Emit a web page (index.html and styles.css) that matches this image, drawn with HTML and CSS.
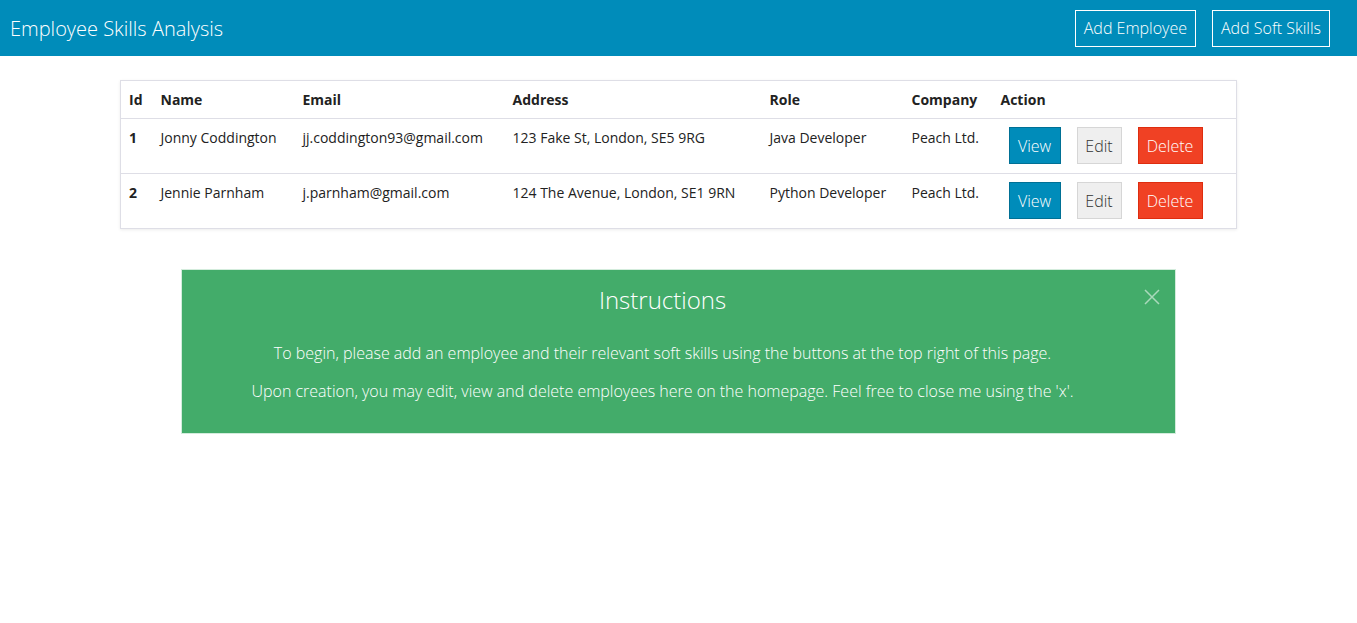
FILE: index.html
```html
<!DOCTYPE html>
<html>
<head>
<meta charset="utf-8">
<link rel="stylesheet" href="styles.css">
</head>
<body>
<header class="topbar">
  <h1 class="title">Employee Skills Analysis</h1>
  <nav class="top-actions">
    <a class="top-btn">Add Employee</a>
    <a class="top-btn">Add Soft Skills</a>
  </nav>
</header>
<main class="content">
  <table class="emp-table">
    <colgroup>
      <col class="c-id"><col class="c-name"><col class="c-email"><col class="c-addr"><col class="c-role"><col class="c-comp"><col class="c-act">
    </colgroup>
    <thead>
      <tr><th>Id</th><th>Name</th><th>Email</th><th>Address</th><th>Role</th><th>Company</th><th>Action</th></tr>
    </thead>
    <tbody>
      <tr>
        <td class="id">1</td><td>Jonny Coddington</td><td>jj.coddington93@gmail.com</td><td>123 Fake St, London, SE5 9RG</td><td>Java Developer</td><td>Peach Ltd.</td>
        <td class="actions"><div class="btn-group"><a class="btn btn-view">View</a><a class="btn btn-edit">Edit</a><a class="btn btn-delete">Delete</a></div></td>
      </tr>
      <tr>
        <td class="id">2</td><td>Jennie Parnham</td><td>j.parnham@gmail.com</td><td>124 The Avenue, London, SE1 9RN</td><td>Python Developer</td><td>Peach Ltd.</td>
        <td class="actions"><div class="btn-group"><a class="btn btn-view">View</a><a class="btn btn-edit">Edit</a><a class="btn btn-delete">Delete</a></div></td>
      </tr>
    </tbody>
  </table>

  <section class="callout">
    <h2 class="callout-title">Instructions</h2>
    <p>To begin, please add an employee and their relevant soft skills using the buttons at the top right of this page.</p>
    <p>Upon creation, you may edit, view and delete employees here on the homepage. Feel free to close me using the 'x'.</p>
    <span class="close" aria-label="close"><svg width="16" height="16" viewBox="0 0 16 16"><path d="M1 1 L15 15 M15 1 L1 15" stroke="currentColor" stroke-width="1.5" fill="none"/></svg></span>
  </section>
</main>
</body>
</html>
```
FILE: styles.css
```css
* { box-sizing: border-box; }
html, body { margin: 0; padding: 0; }
body {
  font-family: "Open Sans", "Liberation Sans", sans-serif;
  color: #222;
  background: #fff;
}
.topbar {
  height: 56px;
  background: #008cba;
  display: flex;
  align-items: center;
  justify-content: space-between;
  padding: 0 27px 0 10px;
}
.title {
  margin: 0;
  font-size: 20px;
  font-weight: 300;
  color: #fff;
}
.top-actions {
  display: flex;
  gap: 16px;
}
.top-btn {
  display: inline-flex;
  align-items: center;
  height: 37px;
  padding: 0 8px;
  border: 1px solid #fff;
  color: #fff;
  font-size: 16px;
  font-weight: 300;
}
.content {
  display: flex;
  flex-direction: column;
  align-items: center;
  padding-top: 24px;
}
.emp-table {
  width: 1117px;
  border-collapse: collapse;
  border: 1px solid #dedee6;
  box-shadow: 0 1px 3px rgba(0,0,0,0.08);
  font-size: 14px;
  table-layout: fixed;
}
.c-id { width: 32px; }
.c-name { width: 142px; }
.c-email { width: 210px; }
.c-addr { width: 257px; }
.c-role { width: 142px; }
.c-comp { width: 89px; }
.emp-table th {
  text-align: left;
  font-weight: 700;
  height: 38px;
  padding: 0 0 0 8px;
  color: #222;
  border-bottom: 1px solid #dedee6;
}
.emp-table td {
  vertical-align: top;
  padding: 9px 0 9px 8px;
  height: 55px;
  border-bottom: 1px solid #dedee6;
  line-height: 20px;
  white-space: nowrap;
}
.emp-table td.id { font-weight: 700; }
.emp-table td.actions {
  padding: 8px 0 0 16px;
}
.btn-group {
  display: flex;
  gap: 16px;
}
.btn {
  display: inline-flex;
  align-items: center;
  justify-content: center;
  height: 37px;
  font-size: 16px;
  font-weight: 300;
  border: 1px solid;
  cursor: pointer;
}
.btn-view { background: #008cba; border-color: #007095; color: #fff; width: 52px; }
.btn-edit { background: #efefef; border-color: #d6d6d6; color: #333; width: 45px; }
.btn-delete { background: #f04124; border-color: #de2d0f; color: #fff; width: 65px; }
.callout {
  position: relative;
  width: 995px;
  margin-top: 40px;
  background: #43ac6a;
  border: 1px solid #d3ecdc;
  color: #fff;
  text-align: center;
  padding: 15px 46px 31px 14px;
}
.callout-title {
  margin: 0 0 27px;
  font-size: 24px;
  font-weight: 300;
  line-height: 30px;
}
.callout p {
  margin: 0 0 16px;
  font-size: 16px;
  font-weight: 300;
  line-height: 22px;
}
.callout p:last-of-type { margin-bottom: 0; }
.close {
  position: absolute;
  top: 19px;
  right: 15px;
  width: 16px;
  height: 16px;
  color: rgba(255,255,255,0.55);
}
.close svg { display: block; }
```
